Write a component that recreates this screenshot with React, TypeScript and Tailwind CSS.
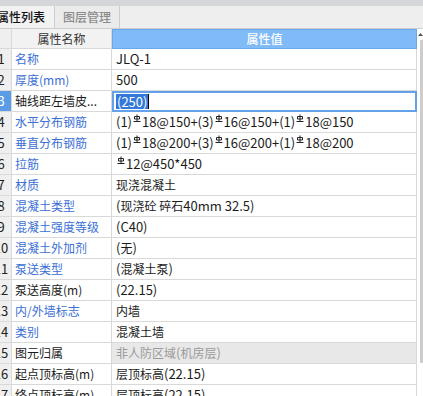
import React from "react";

const Rebar = () => (
  <svg width="8" height="9" viewBox="0 0 8 9" className="inline-block align-top mt-[2px] mx-[1px]" fill="none" stroke="#222" strokeWidth="1">
    <path d="M4 0.5 V7.5" />
    <path d="M1.5 5 V2.5 H6.5 V5 H1.5" />
    <path d="M0.5 7.5 H7.5" />
  </svg>
);

const Mixed = ({ text }: { text: string }) => {
  const parts = text.split(/([\u3000-\u9fff\uff00-\uffef]+)/).filter((p) => p.length > 0);
  return (
    <>
      {parts.map((p, i) =>
        /[\u3000-\u9fff\uff00-\uffef]/.test(p) ? (
          <span key={i}>{p}</span>
        ) : (
          <span key={i} className="text-[13px]">
            {p}
          </span>
        )
      )}
    </>
  );
};

type Row = { n: number; name: string; blue: boolean; value: React.ReactNode; gray?: boolean; sel?: boolean };

const rebar = (parts: string[]) => (
  <>
    {parts.map((p, i) => (
      <React.Fragment key={i}>
        {i > 0 && <Rebar />}
        {p && <Mixed text={p} />}
      </React.Fragment>
    ))}
  </>
);

const m = (t: string) => <Mixed text={t} />;

const rows: Row[] = [
  { n: 1, name: "名称", blue: true, value: m("JLQ-1") },
  { n: 2, name: "厚度(mm)", blue: true, value: m("500") },
  { n: 3, name: "轴线距左墙皮...", blue: false, value: "(250)", sel: true },
  { n: 4, name: "水平分布钢筋", blue: true, value: rebar(["(1)", "18@150+(3)", "16@150+(1)", "18@150"]) },
  { n: 5, name: "垂直分布钢筋", blue: true, value: rebar(["(1)", "18@200+(3)", "16@200+(1)", "18@200"]) },
  { n: 6, name: "拉筋", blue: true, value: rebar(["", "12@450*450"]) },
  { n: 7, name: "材质", blue: true, value: m("现浇混凝土") },
  { n: 8, name: "混凝土类型", blue: true, value: m("(现浇砼 碎石40mm 32.5)") },
  { n: 9, name: "混凝土强度等级", blue: true, value: m("(C40)") },
  { n: 10, name: "混凝土外加剂", blue: true, value: m("(无)") },
  { n: 11, name: "泵送类型", blue: true, value: m("(混凝土泵)") },
  { n: 12, name: "泵送高度(m)", blue: false, value: m("(22.15)") },
  { n: 13, name: "内/外墙标志", blue: true, value: m("内墙") },
  { n: 14, name: "类别", blue: true, value: m("混凝土墙") },
  { n: 15, name: "图元归属", blue: false, value: m("非人防区域(机房层)"), gray: true },
  { n: 16, name: "起点顶标高(m)", blue: false, value: m("层顶标高(22.15)") },
  { n: 17, name: "终点顶标高(m)", blue: false, value: m("层顶标高(22.15)") },
];

export default function App() {
  return (
    <div
      className="w-[423px] h-[396px] overflow-hidden bg-white text-[12px] text-[#1b1b1b] flex flex-col"
      style={{ fontFamily: '"Noto Sans CJK SC", "Noto Sans", sans-serif' }}
    >
      <div className="h-[6px] bg-[#d5d6da] shrink-0" />
      <div className="h-[23px] shrink-0 bg-[#eeeeee] border-b border-[#cdcdcd] flex">
        <div className="-ml-[4px] w-[59px] flex items-center pl-[1px] border-r border-[#cdcdcd] bg-[#f2f2f2] text-[12px] font-medium text-[#111]">
          属性列表
        </div>
        <div className="w-[65px] flex items-center justify-center border-r border-[#cdcdcd] bg-[#ebebeb] text-[12px] font-medium text-[#8c8c8c]">
          图层管理
        </div>
      </div>
      <div className="flex flex-1 min-h-0">
        <div className="w-[417px] flex flex-col">
          <div className="h-[20px] flex shrink-0">
            <div className="w-[12px] bg-[#efefef] border-r border-b border-[#d9d9d9]" />
            <div className="w-[100px] bg-[#f2f2f2] border-r border-b border-[#d9d9d9] flex items-center justify-center text-[#333]">
              属性名称
            </div>
            <div className="w-[305px] bg-[#80bbf8] border border-[#6aa8ee] flex items-center justify-center text-white font-medium">
              属性值
            </div>
          </div>
          {rows.map((r) => (
            <div key={r.n} className="h-[21px] flex shrink-0">
              <div
                className={`w-[12px] overflow-hidden border-r border-b border-[#d9d9d9] flex items-center ${
                  r.sel ? "bg-[#5a9de6] text-white" : "bg-[#efefef] text-[#222]"
                }`}
              >
                <div className="w-[26px] -ml-[12px] shrink-0 text-center text-[13px]">{r.n}</div>
              </div>
              <div
                className={`w-[100px] border-r border-b border-[#d9d9d9] flex items-center pl-[3px] whitespace-nowrap overflow-hidden ${
                  r.blue ? "text-[#3b6fd6]" : "text-[#1b1b1b]"
                }`}
              >
                {r.name}
              </div>
              {r.sel ? (
                <div className="w-[305px] border-2 border-[#63a2e8] flex items-center pl-[2px]">
                  <span className="bg-[#3379d9] text-white px-[1px] leading-[15px] text-[13px]">(250)</span>
                  <span className="w-[1px] h-[15px] bg-black" />
                </div>
              ) : (
                <div
                  className={`w-[305px] border-r border-b border-[#d9d9d9] flex items-center pl-[4px] whitespace-nowrap ${
                    r.gray ? "bg-[#e8e8e8] text-[#9a9a9a]" : "bg-white text-[#1b1b1b]"
                  }`}
                >
                  <span>{r.value}</span>
                </div>
              )}
            </div>
          ))}
        </div>
        <div className="w-[6px] flex flex-col items-end">
          <div className="h-[4px]" />
          <svg width="5" height="4" viewBox="0 0 5 4">
            <path d="M2.5 0 L5 3 H0 Z" fill="#555" />
          </svg>
          <div className="h-[3px]" />
          <div className="w-[3px] h-[323px] bg-[#cdcdcd] rounded-l-[1px]" />
        </div>
      </div>
    </div>
  );
}
